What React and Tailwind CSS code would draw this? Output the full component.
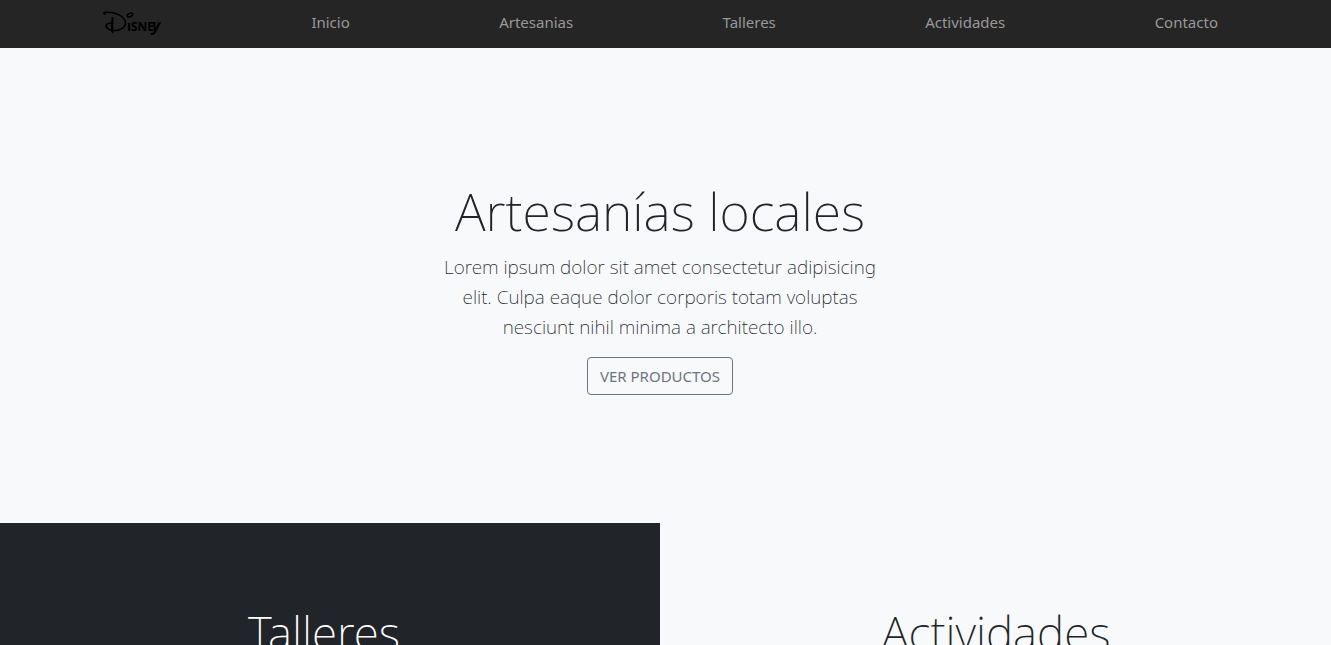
const links = ["Inicio", "Artesanias", "Talleres", "Actividades", "Contacto"];

function Logo() {
  return (
    <svg viewBox="0 -3 60 28" className="block h-7 w-[60px]" role="img" aria-label="Disney">
      <g fill="#000" fontFamily="'Noto Sans', sans-serif" fontWeight="700">
        <text x="25" y="20" fontSize="14">ı</text>
        <text x="29" y="20" fontSize="12">SNE</text>
        <text x="50" y="20" fontSize="16" fontStyle="italic">y</text>
      </g>
      <g fill="none" stroke="#000" strokeLinecap="round" strokeLinejoin="round">
        <path strokeWidth="1.500" d="M3 3 C-1 1 5 1 9 1.500 C17 2.500 23.500 7 23.500 12 C23.500 17 17 20 11 19.500 C6 19 3 16 4.500 13.500 C5.500 12 8 12 11 12.500" />
        <path strokeWidth="2" d="M10.500 7 C10 12 10 17 10.500 21" />
        <ellipse cx="28" cy="4" rx="2.800" ry="1.700" strokeWidth="1.500" transform="rotate(-25 28 4)" />
      </g>
    </svg>
  );
}

export default function App() {
  return (
    <div className="flex h-screen flex-col overflow-hidden bg-[#f8f9fb] pr-[11px] font-['Noto_Sans',sans-serif] text-[#212529]">
      <header className="-mr-[11px] flex h-12 shrink-0 flex-col justify-center bg-[#252525] pr-[11px] pb-1">
        <nav className="mx-auto flex w-full max-w-[1140px] items-center justify-between px-3">
          <a href="#inicio"><Logo /></a>
          {links.map((label) => (
            <a key={label} href={"#" + label.toLowerCase()} className="text-[15px] leading-6 text-[#999]">
              {label}
            </a>
          ))}
        </nav>
      </header>
      <main>
        <section className="flex flex-col items-center px-4 pt-[129px] pb-32 text-center">
          <h1 className="mb-2 text-[52px] leading-[67px] font-extralight">Artesanías locales</h1>
          <p className="mb-[15px] max-w-[454px] text-[19px] leading-[30px] font-extralight">
            Lorem ipsum dolor sit amet consectetur adipisicing elit. Culpa eaque dolor corporis totam voluptas nesciunt nihil minima a architecto illo.
          </p>
          <button type="button" className="rounded border border-[#6c757d] px-3 py-[6px] text-[15px] leading-6 text-[#6c757d]">
            VER PRODUCTOS
          </button>
        </section>
        <div className="grid grid-cols-2 text-center">
          <section className="bg-[#212529] pt-20 pr-3 pb-20 text-white">
            <h2 className="text-[46px] leading-[58px] font-extralight">Talleres</h2>
          </section>
          <section className="pt-20 pb-20 pl-3">
            <h2 className="text-[46px] leading-[58px] font-extralight">Actividades</h2>
          </section>
        </div>
      </main>
    </div>
  );
}
